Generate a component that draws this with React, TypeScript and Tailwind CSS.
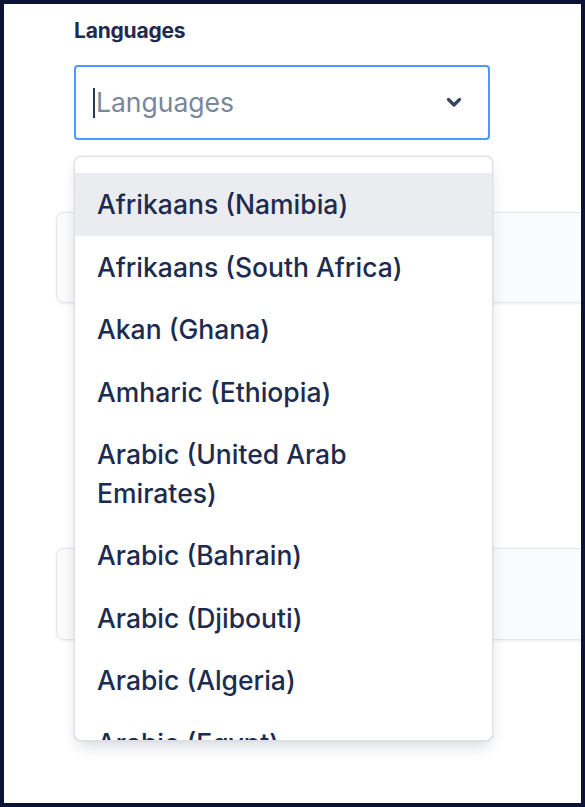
import React from "react";

const items: string[] = [
  "Afrikaans (Namibia)",
  "Afrikaans (South Africa)",
  "Akan (Ghana)",
  "Amharic (Ethiopia)",
  "Arabic (United Arab Emirates)",
  "Arabic (Bahrain)",
  "Arabic (Djibouti)",
  "Arabic (Algeria)",
  "Arabic (Egypt)",
];

export default function App() {
  return (
    <div
      className="relative w-[585px] h-[807px] overflow-hidden border-4 border-[#0b1437] bg-white"
      style={{ fontFamily: "Inter, 'Liberation Sans', sans-serif" }}
    >
      <div className="pl-[70px]">
        <div className="mt-[12px] h-[30px] leading-[30px] text-[21px] font-bold text-[#1d2b4f] tracking-[-0.2px]">
          Languages
        </div>
        <div className="mt-[19px] w-[416px] h-[75px] rounded-[4px] border-2 border-[#4c9aff] flex items-center pl-[17px] pr-[26px]">
          <span className="w-[2px] h-[30px] bg-[#253858] mr-[1px]" />
          <span className="flex-1 text-[26.5px] text-[#7a869a]">Languages</span>
          <svg width="16" height="11" viewBox="0 0 16 11" className="text-[#344563]">
            <path d="M2.5 2.5 L8 8 L13.5 2.5" fill="none" stroke="currentColor" strokeWidth="3.2" strokeLinecap="round" strokeLinejoin="round" />
          </svg>
        </div>
      </div>

      <div className="ml-[52px] mt-[72px] w-[560px] h-[91px] rounded-[8px] border border-[#e4e6ea] bg-[#fafbfc] shadow-[0_1px_3px_rgba(9,30,66,0.08)]" />
      <div className="ml-[52px] mt-[245px] w-[560px] h-[92px] rounded-[8px] border border-[#e4e6ea] bg-[#fafbfc] shadow-[0_1px_3px_rgba(9,30,66,0.08)]" />

      <div className="absolute top-[152px] left-[70px] w-[419px] h-[585px] overflow-hidden rounded-[7px] bg-white border border-[#dfe1e6] shadow-[0_8px_16px_-4px_rgba(9,30,66,0.18),0_0_1px_rgba(9,30,66,0.31)]">
        <div className="pt-[16px]">
          {items.map((t, i) => (
            <div
              key={t}
              className={
                i === 0
                  ? "bg-[#ebecf0] pl-[22px] pr-[40px] py-[12px] leading-[38.5px] text-[26.5px] font-medium text-[#1d2b4f]"
                  : "pl-[22px] pr-[40px] py-[12px] leading-[38.5px] text-[26.5px] font-medium text-[#1d2b4f]"
              }
            >
              {t}
            </div>
          ))}
        </div>
      </div>
    </div>
  );
}
